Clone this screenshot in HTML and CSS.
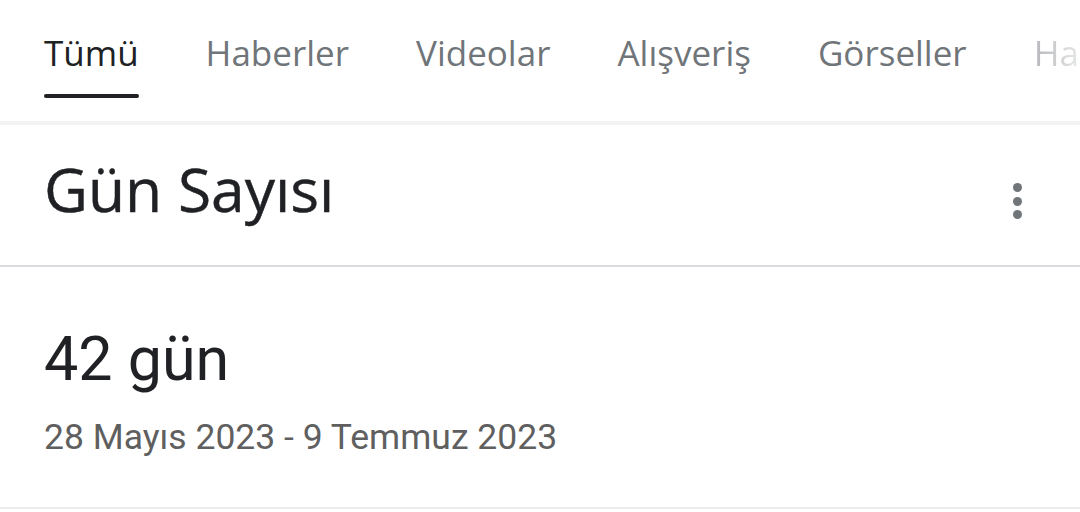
FILE: index.html
```html
<!DOCTYPE html>
<html lang="tr">
<head>
    <meta charset="UTF-8">
    <meta name="viewport" content="width=device-width, initial-scale=1.0">
    <title>Gün Sayısı</title>
    <link rel="stylesheet" href="styles.css">
</head>
<body>
    <nav class="tabs">
        <a class="tab tab-active">Tümü</a>
        <a class="tab">Haberler</a>
        <a class="tab">Videolar</a>
        <a class="tab">Alışveriş</a>
        <a class="tab">Görseller</a>
        <a class="tab tab-fade">Ha</a>
    </nav>

    <div class="gap"></div>

    <section class="card">
        <div class="card-header">
            <h2 class="card-title">Gün Sayısı</h2>
            <span class="menu-dots">
                <i></i><i></i><i></i>
            </span>
        </div>
        <div class="card-body">
            <div class="result">42 gün</div>
            <div class="range">28 Mayıs 2023 - 9 Temmuz 2023</div>
        </div>
    </section>
</body>
</html>
```

FILE: styles.css
```css
* {
    margin: 0;
    padding: 0;
    box-sizing: border-box;
}

:root {
    --text-primary: #202124;
    --text-secondary: #5f6368;
    --tab-grey: #70757a;
    --divider: #dadce0;
}

body {
    font-family: "Open Sans", Arial, sans-serif;
    background: #ffffff;
    color: var(--text-primary);
    width: 1080px;
    height: 512px;
    overflow: hidden;
}

.tabs {
    height: 121px;
    display: flex;
    gap: 67px;
    padding-left: 44px;
    white-space: nowrap;
    overflow: hidden;
}

.tab {
    position: relative;
    font-size: 35px;
    line-height: 1;
    padding-top: 35px;
    color: var(--tab-grey);
}

.tab-active {
    color: var(--text-primary);
}

.tab-active::after {
    content: "";
    position: absolute;
    left: 0;
    right: 0;
    top: 94px;
    height: 4px;
    border-radius: 2px;
    background: var(--text-primary);
}

.tab-fade {
    background: linear-gradient(90deg, #b5b7ba 0%, #e6e7e8 100%);
    -webkit-background-clip: text;
    background-clip: text;
    color: transparent;
}

.gap {
    height: 4px;
    background: #f3f3f3;
}

.card-header {
    height: 142px;
    display: flex;
    align-items: center;
    justify-content: space-between;
    padding: 0 58px 0 44px;
    border-bottom: 2px solid var(--divider);
}

.card-title {
    font-size: 60.5px;
    font-weight: 400;
    margin-top: -14px;
    -webkit-text-stroke: 0.4px var(--text-primary);
}

.menu-dots {
    display: flex;
    flex-direction: column;
    gap: 4.5px;
    padding-top: 12px;
}

.menu-dots i {
    width: 9px;
    height: 9px;
    border-radius: 50%;
    background: #70757a;
}

.card-body {
    height: 242px;
    padding: 62px 44px 0;
    font-family: Roboto, Arial, sans-serif;
    border-bottom: 2px solid #ececec;
}

.result {
    font-size: 61px;
    line-height: 1;
}

.range {
    margin-top: 26px;
    font-size: 35.5px;
    color: #5f5f5f;
}
```
